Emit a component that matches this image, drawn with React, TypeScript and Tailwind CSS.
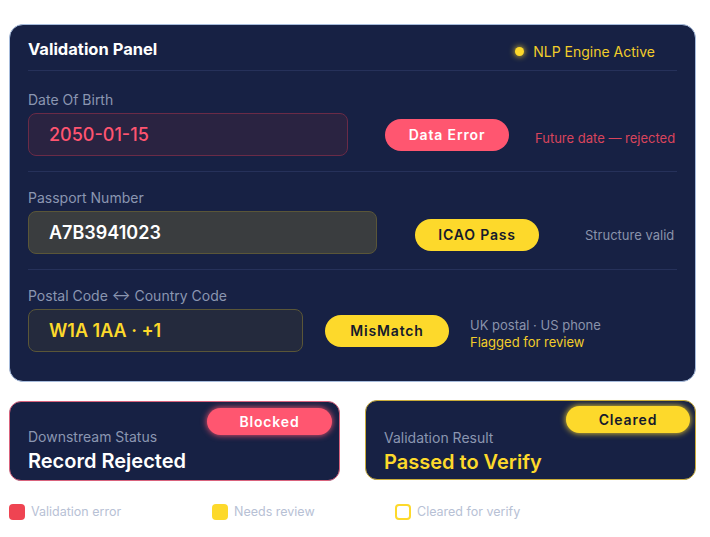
import React from "react";

type Field = {
  label: string;
  value: string;
  inputWidth: string;
  inputClass: string;
  valueClass: string;
  pill: string;
  pillClass: string;
  pillGap: string;
  section: string;
  note: React.ReactNode;
};

const fields: Field[] = [
  {
    label: "Date Of Birth",
    value: "2050-01-15",
    inputWidth: "w-[320px]",
    inputClass: "bg-[#2a2341] border-[#6a2b47]",
    valueClass: "text-[#ff5470] font-medium",
    pill: "Data Error",
    pillClass: "bg-[#ff5670] text-white",
    pillGap: "ml-[37px]",
    section: "pt-[19px] pb-[15px] border-b border-[#26315a]",
    note: <p className="ml-[26px] mt-[8px] whitespace-nowrap text-[13px] text-[#d9445c]">Future date — rejected</p>,
  },
  {
    label: "Passport Number",
    value: "A7B3941023",
    inputWidth: "w-[349px]",
    inputClass: "bg-[#3a3d3f] border-[#5a5638]",
    valueClass: "text-white font-semibold",
    pill: "ICAO Pass",
    pillClass: "bg-[#fdd92b] text-[#151a2c] mt-[4px]",
    pillGap: "ml-[38px]",
    section: "pt-[16px] pb-[15px] border-b border-[#26315a]",
    note: <p className="ml-[46px] mt-[7px] whitespace-nowrap text-[13px] text-[#8a93ab]">Structure valid</p>,
  },
  {
    label: "Postal Code ↔ Country Code",
    value: "W1A 1AA · +1",
    inputWidth: "w-[275px]",
    inputClass: "bg-[#242a3d] border-[#5a5638]",
    valueClass: "text-[#fdd92b] font-semibold",
    pill: "MisMatch",
    pillClass: "bg-[#fdd92b] text-[#151a2c]",
    pillGap: "ml-[22px]",
    section: "pt-[16px] pb-[29px]",
    note: (
      <div className="ml-[21px] mt-[6px] whitespace-nowrap text-[13px] leading-[17px]">
        <p className="text-[#8a93ab]">UK postal · US phone</p>
        <p className="text-[#f2cd2a]">Flagged for review</p>
      </div>
    ),
  },
];

function FieldRow({ f }: { f: Field }) {
  return (
    <div className={f.section}>
      <p className="text-[14px] leading-[20px] text-[#8b96b1]">{f.label}</p>
      <div className="mt-[3px] flex items-center">
        <div className={`${f.inputWidth} h-[43px] shrink-0 rounded-[8px] border flex items-center pl-[20px] ${f.inputClass}`}>
          <span className={`text-[18px] ${f.valueClass}`}>{f.value}</span>
        </div>
        <div
          className={`${f.pillGap} w-[124px] h-[32px] shrink-0 rounded-full flex items-center justify-center text-[14px] font-semibold tracking-[0.06em] ${f.pillClass}`}
        >
          {f.pill}
        </div>
        {f.note}
      </div>
    </div>
  );
}

export default function App() {
  return (
    <div className="min-h-screen bg-white pt-[24px] pl-[9px]" style={{ fontFamily: "Inter, 'Noto Sans', sans-serif" }}>
      <div className="w-[687px]">
        <div className="h-[358px] rounded-[14px] border border-[#a7bcdc] bg-[#172144] px-[18px]">
          <div className="flex items-center justify-between border-b border-[#26315a] pt-[10px] pb-[8px]">
            <h1 className="text-[16.5px] leading-[24px] font-bold text-white">Validation Panel</h1>
            <div className="mr-[22px] mt-[6px] flex items-center gap-[9px]">
              <span className="h-[9px] w-[9px] rounded-full bg-[#fdd92b] shadow-[0_0_6px_#fdd92b]" />
              <span className="text-[14px] text-[#f2cd2a]">NLP Engine Active</span>
            </div>
          </div>
          {fields.map((f) => (
            <FieldRow key={f.label} f={f} />
          ))}
        </div>

        <div className="mt-[19px] flex items-start gap-[25px]">
          <div className="relative h-[80px] w-[331px] rounded-[12px] border border-[#d9637d] bg-[#172144] pl-[18px] pt-[25px]">
            <div className="absolute right-[7px] top-[6px] flex h-[27px] w-[125px] items-center justify-center rounded-full bg-[#ff5670] text-[14px] font-semibold tracking-[0.06em] text-white shadow-[0_0_6px_#ff5670]">
              Blocked
            </div>
            <p className="text-[14px] leading-[20px] text-[#8b96b1]">Downstream Status</p>
            <p className="text-[20px] leading-[28px] font-semibold text-white">Record Rejected</p>
          </div>
          <div className="relative -mt-[1px] h-[80px] w-[331px] rounded-[12px] border border-[#c9ac3a] bg-[#172144] pl-[18px] pt-[27px]">
            <div className="absolute right-[5px] top-[5px] flex h-[27px] w-[124px] items-center justify-center rounded-full bg-[#fdd92b] text-[14px] font-semibold tracking-[0.06em] text-[#151a2c] shadow-[0_0_6px_#fdd92b]">
              Cleared
            </div>
            <p className="text-[14px] leading-[20px] text-[#8b96b1]">Validation Result</p>
            <p className="text-[20px] leading-[28px] font-semibold text-[#fdd92b]">Passed to Verify</p>
          </div>
        </div>

        <div className="mt-[22px] flex items-center text-[12.5px] text-[#b7c1d5]">
          <div className="flex w-[203px] items-center gap-[6px]">
            <span className="h-[16px] w-[16px] rounded-[4px] bg-[#ef4452]" />
            <span>Validation error</span>
          </div>
          <div className="flex w-[183px] items-center gap-[6px]">
            <span className="h-[16px] w-[16px] rounded-[4px] bg-[#fdd92b]" />
            <span>Needs review</span>
          </div>
          <div className="flex items-center gap-[6px]">
            <span className="h-[16px] w-[16px] rounded-[4px] border-2 border-[#fdd92b]" />
            <span>Cleared for verify</span>
          </div>
        </div>
      </div>
    </div>
  );
}
